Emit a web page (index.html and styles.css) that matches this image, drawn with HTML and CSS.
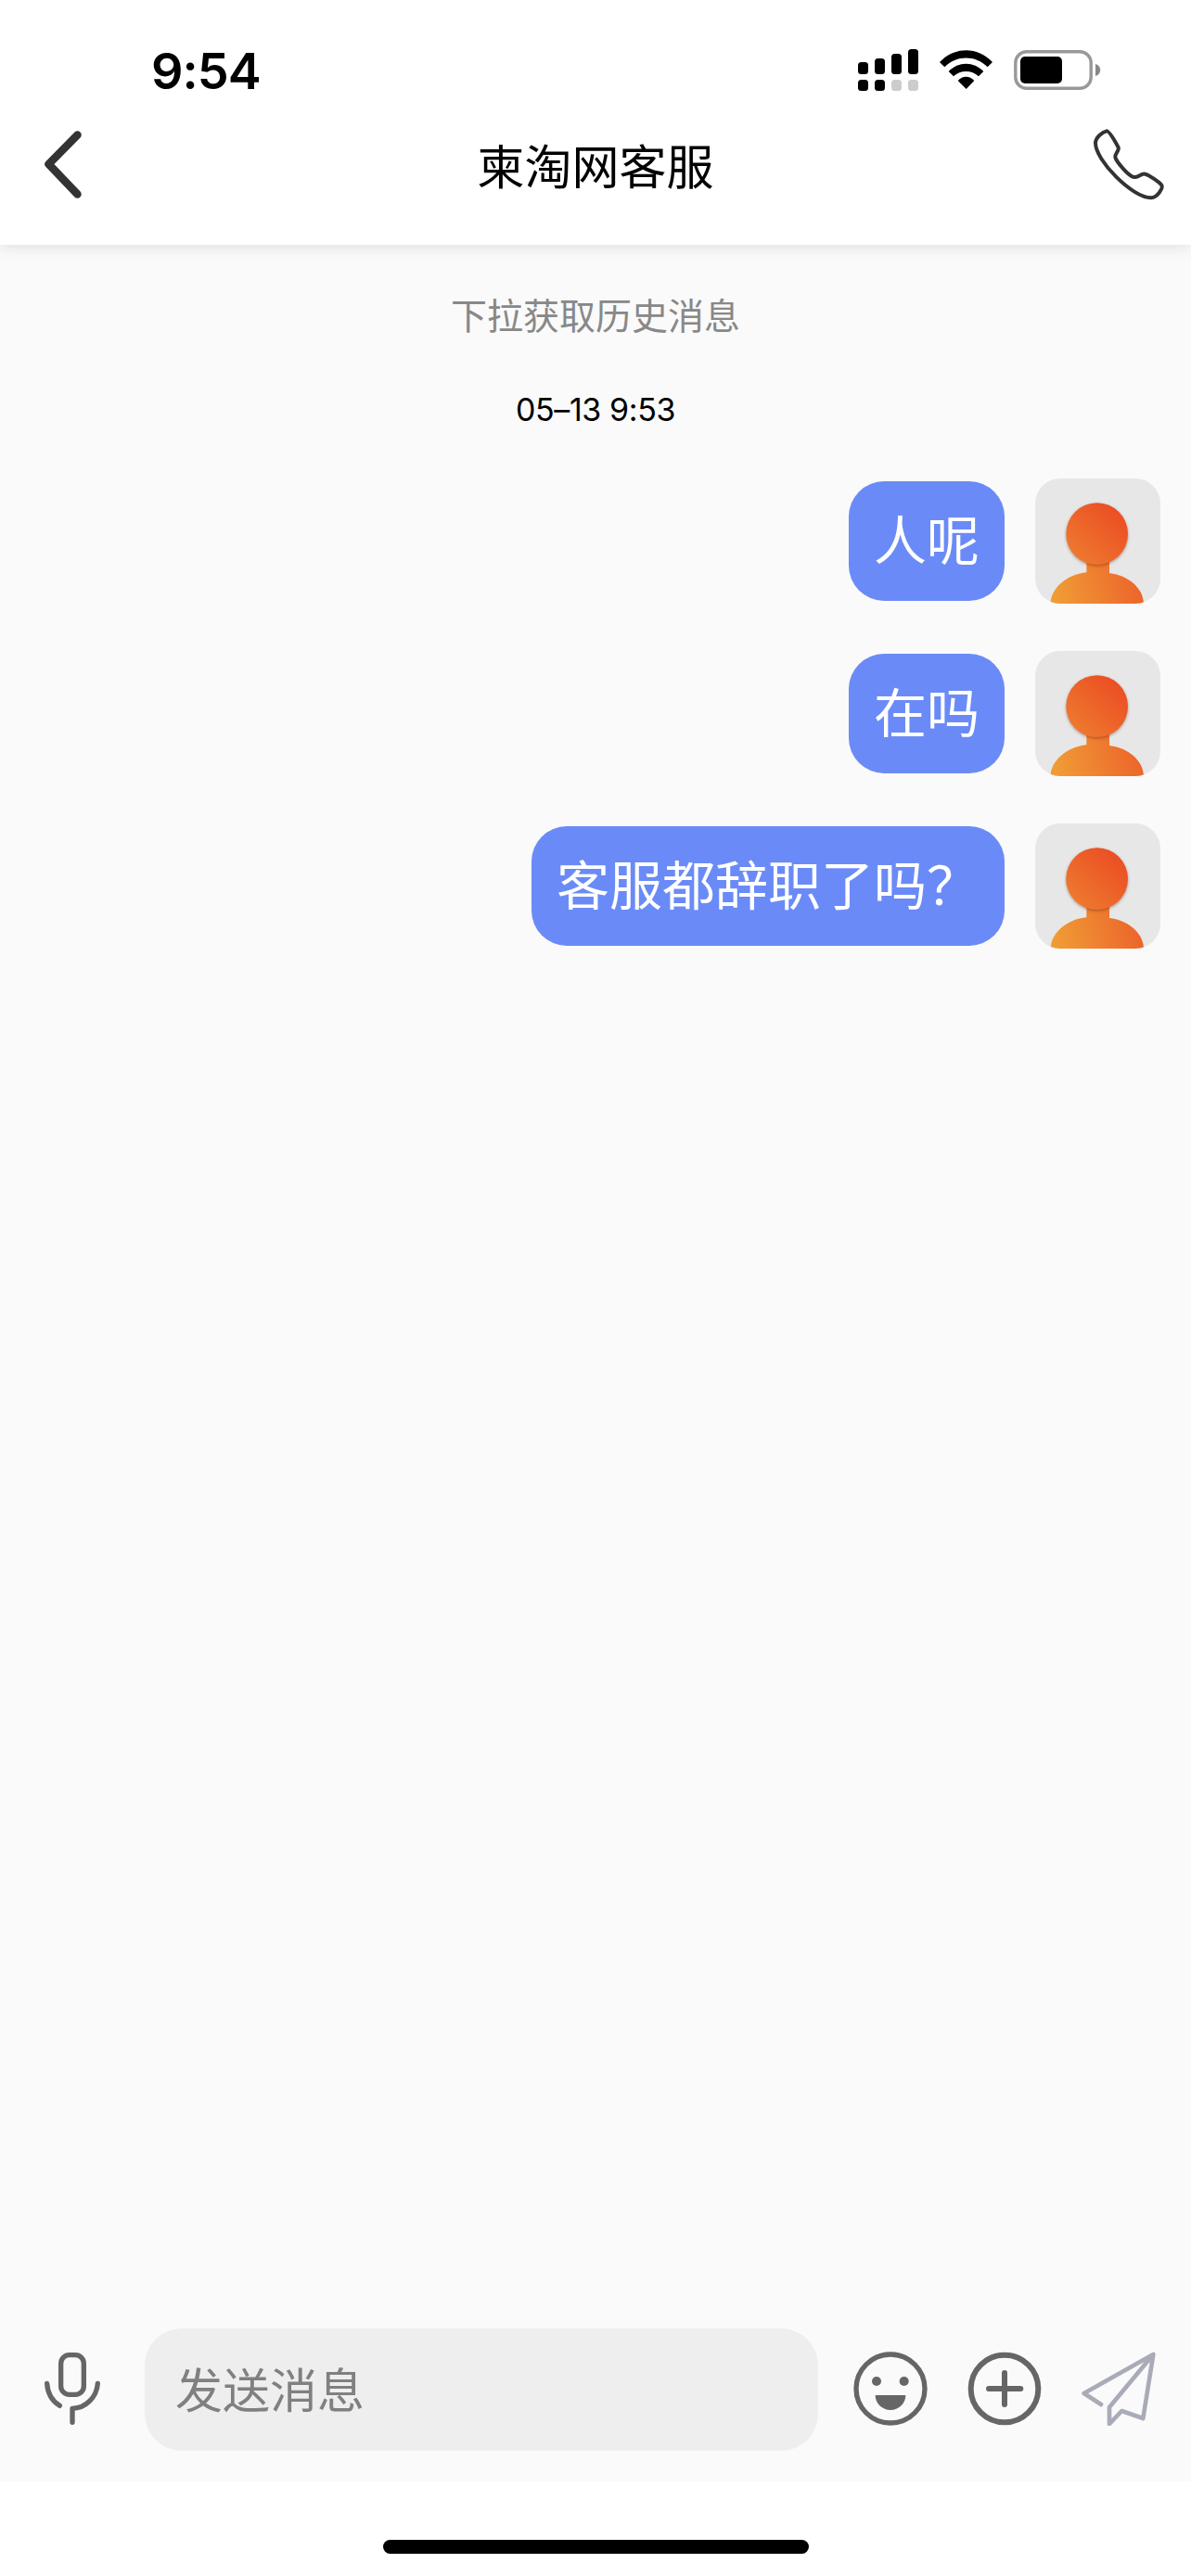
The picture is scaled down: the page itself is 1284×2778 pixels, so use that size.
FILE: index.html
```
<!DOCTYPE html>
<html lang="zh-CN">
<head>
  <meta charset="UTF-8">
  <title>柬淘网客服</title>
  <meta name="viewport" content="width=device-width, initial-scale=1.0">
  <link rel="stylesheet" href="styles.css">
</head>
<body>
  <!-- 头像图形，消息列表共用 -->
  <svg class="defs" width="0" height="0">
    <defs>
      <linearGradient id="skin" gradientUnits="userSpaceOnUse" x1="30" y1="400" x2="290" y2="120">
        <stop offset="0" stop-color="#f09c36"/>
        <stop offset="1" stop-color="#eb4e24"/>
      </linearGradient>
      <linearGradient id="coat" gradientUnits="userSpaceOnUse" x1="70" y1="400" x2="350" y2="330">
        <stop offset="0" stop-color="#f09c36"/>
        <stop offset="1" stop-color="#ec622a"/>
      </linearGradient>
      <filter id="shade" x="-20%" y="-20%" width="140%" height="140%" color-interpolation-filters="sRGB">
        <feDropShadow dx="0" dy="4" stdDeviation="4" flood-color="#7a2c10" flood-opacity="0.5"/>
      </filter>
      <symbol id="avatar" viewBox="0 0 405 405">
        <path d="M166 260H240V306C305 314 351 358 351 405H50C50 358 100 310 166 304Z" fill="url(#coat)"/>
        <circle cx="200" cy="179" r="100" fill="url(#skin)" filter="url(#shade)"/>
      </symbol>
    </defs>
  </svg>

  <div class="app">
    <header class="header">
      <div class="status-bar">
        <span class="clock">9:54</span>
        <div class="status-icons">
          <svg class="signal" viewBox="0 0 65 46">
            <rect x="0" y="14" width="11" height="13" rx="3.5"/>
            <rect x="18" y="10" width="11" height="17" rx="3.5"/>
            <rect x="36" y="5" width="11" height="22" rx="3.5"/>
            <rect x="54" y="0" width="11" height="27" rx="3.5"/>
            <rect x="0" y="33" width="11" height="12" rx="3.5"/>
            <rect x="18" y="33" width="11" height="12" rx="3.5"/>
            <rect class="dim" x="36" y="33" width="11" height="12" rx="3.5"/>
            <rect class="dim" x="54" y="33" width="11" height="12" rx="3.5"/>
          </svg>
          <svg class="wifi" viewBox="0 0 171 126">
            <path d="M0 39C48-12 123-12 171 39L155 55C116 16 55 16 16 55Z"/>
            <path d="M29 69C61 36 110 36 142 69L126 85C103 64 68 64 45 85Z"/>
            <path d="M59 99C74 82 97 82 112 99L86 126Z"/>
          </svg>
          <svg class="battery" viewBox="0 0 94 43">
            <rect x="1.8" y="1.8" width="81.4" height="39.4" rx="12" fill="none" stroke="#999" stroke-width="3.4"/>
            <rect x="7" y="7" width="45" height="29" rx="5"/>
            <path d="M88 15C95 17 95 26 88 28Z" fill="#888"/>
          </svg>
        </div>
      </div>
      <nav class="nav">
        <svg class="icon back" viewBox="0 0 80 80">
          <path d="M45.5 8.5L14.5 40L45.5 72.5"/>
        </svg>
        <h1 class="title">柬淘网客服</h1>
        <svg class="icon phone" viewBox="0 0 240 240">
          <path d="M48 13C56 13 72 40 86 66C90 76 75 84 76 98C80 112 118 158 136 162C149 165 158 150 172 152C184 154 218 178 226 188C231 196 214 228 192 229C132 230 12 108 12 52C12 34 34 16 48 13Z"/>
        </svg>
      </nav>
    </header>

    <main class="chat">
      <p class="history-tip">下拉获取历史消息</p>
      <p class="chat-time">05–13 9:53</p>
      <div class="messages">
        <div class="message">
          <div class="bubble">人呢</div>
          <svg class="avatar"><use href="#avatar"/></svg>
        </div>
        <div class="message">
          <div class="bubble">在吗</div>
          <svg class="avatar"><use href="#avatar"/></svg>
        </div>
        <div class="message">
          <div class="bubble">客服都辞职了吗？</div>
          <svg class="avatar"><use href="#avatar"/></svg>
        </div>
      </div>
    </main>

    <footer class="toolbar">
      <svg class="icon mic" viewBox="0 0 240 240">
        <rect x="83" y="11" width="74" height="128" rx="27"/>
        <path d="M38 103C40 134 55 160 79 175"/>
        <path d="M202 103C199 146 164 184 120 184V229"/>
      </svg>
      <input class="message-input" type="text" placeholder="发送消息">
      <div class="actions">
        <svg class="icon smile" viewBox="0 0 240 240">
          <circle cx="120" cy="120" r="111"/>
          <circle class="solid" cx="75" cy="96" r="15"/>
          <circle class="solid" cx="164" cy="96" r="15"/>
          <path class="solid" d="M71 141H169A49 48 0 0 1 71 141Z"/>
        </svg>
        <svg class="icon plus" viewBox="0 0 240 240">
          <circle cx="120" cy="120" r="109"/>
          <path d="M69 120H172M120 69V171"/>
        </svg>
        <svg class="icon send" viewBox="0 0 240 240">
          <path d="M63 171L8 135L232 9L90 180V234L130 192L199 216L232 9"/>
        </svg>
      </div>
    </footer>
    <div class="home-area">
      <div class="home-indicator"></div>
    </div>
  </div>
</body>
</html>
```

FILE: styles.css
```
* {
  box-sizing: border-box;
}
body {
  margin: 0;
  background: #fff;
  font-family: 'Inter', 'Noto Sans CJK SC', sans-serif;
  color: #000;
}
.defs {
  position: absolute;
}
.app {
  display: flex;
  flex-direction: column;
  height: 2778px;
  max-height: 100vh;
}

/* 顶部 */
.header {
  height: 264px;
  background: #fff;
  box-shadow: 0 3px 15px rgba(0, 0, 0, 0.1);
  z-index: 1;
}
.status-bar {
  display: flex;
  justify-content: space-between;
  height: 137px;
  padding: 53px 97px 0 163px;
}
.clock {
  font-size: 54px;
  font-weight: 600;
  line-height: 48px;
  letter-spacing: -1px;
}
.status-icons {
  display: flex;
  align-items: flex-start;
}
.signal {
  width: 65px;
  height: 46px;
  margin-right: 23px;
}
.signal .dim {
  fill: #ccc;
}
.wifi {
  width: 57px;
  height: 42px;
  margin: 1px 23px 0 0;
}
.battery {
  width: 94px;
  height: 43px;
  margin-top: 1px;
}
.nav {
  display: flex;
  justify-content: space-between;
  align-items: center;
  height: 80px;
  padding: 0 27px 0 38px;
}
.title {
  margin: 8px 11px 0 0;
  font-size: 51px;
  font-weight: 400;
  line-height: 80px;
}
.icon {
  flex: none;
  width: 80px;
  height: 80px;
  fill: none;
  stroke: #666;
  stroke-linecap: round;
  stroke-linejoin: round;
}
.back {
  stroke: #333;
  stroke-width: 8.5;
}
.phone {
  stroke: #333;
  stroke-width: 12;
}

/* 聊天内容 */
.chat {
  flex: 1;
  background: #fafafa;
  text-align: center;
}
.history-tip {
  margin: 47px 0 0;
  font-size: 39px;
  line-height: 60px;
  color: #888;
}
.chat-time {
  margin: 46px 0 0;
  font-size: 34px;
  line-height: 50px;
  letter-spacing: -0.4px;
}
.messages {
  display: flex;
  flex-direction: column;
  gap: 51px;
  margin-top: 49px;
  padding: 0 33px;
}
.message {
  display: flex;
  justify-content: flex-end;
  align-items: center;
  gap: 33px;
}
.bubble {
  height: 129px;
  padding: 0 27px;
  border-radius: 38px;
  background: #6a8bf7;
  color: #fff;
  font-size: 57px;
  line-height: 129px;
}
.avatar {
  width: 135px;
  height: 135px;
  border-radius: 27px;
  background: #e7e7e7;
}

/* 底部输入栏 */
.toolbar {
  display: flex;
  align-items: center;
  height: 198px;
  padding: 0 38px;
  background: #fafafa;
}
.toolbar .icon {
  margin-bottom: 2px;
}
.message-input {
  flex: 1;
  min-width: 0;
  height: 132px;
  margin: 0 38px;
  padding: 2px 33px 0;
  border: none;
  border-radius: 40px;
  outline: none;
  background: #eee;
  font-family: inherit;
  font-size: 51px;
}
.message-input::placeholder {
  color: #808080;
}
.actions {
  display: flex;
  gap: 43px;
}
.mic {
  stroke-width: 16;
}
.smile {
  stroke-width: 16;
}
.smile .solid {
  fill: #666;
  stroke: none;
}
.plus {
  stroke-width: 18;
}
.send {
  stroke: #a9abb8;
  stroke-width: 14;
}
.home-area {
  display: flex;
  justify-content: center;
  height: 102px;
  padding-top: 63px;
  background: #fff;
}
.home-indicator {
  width: 459px;
  height: 15px;
  border-radius: 8px;
  background: #000;
}
```
